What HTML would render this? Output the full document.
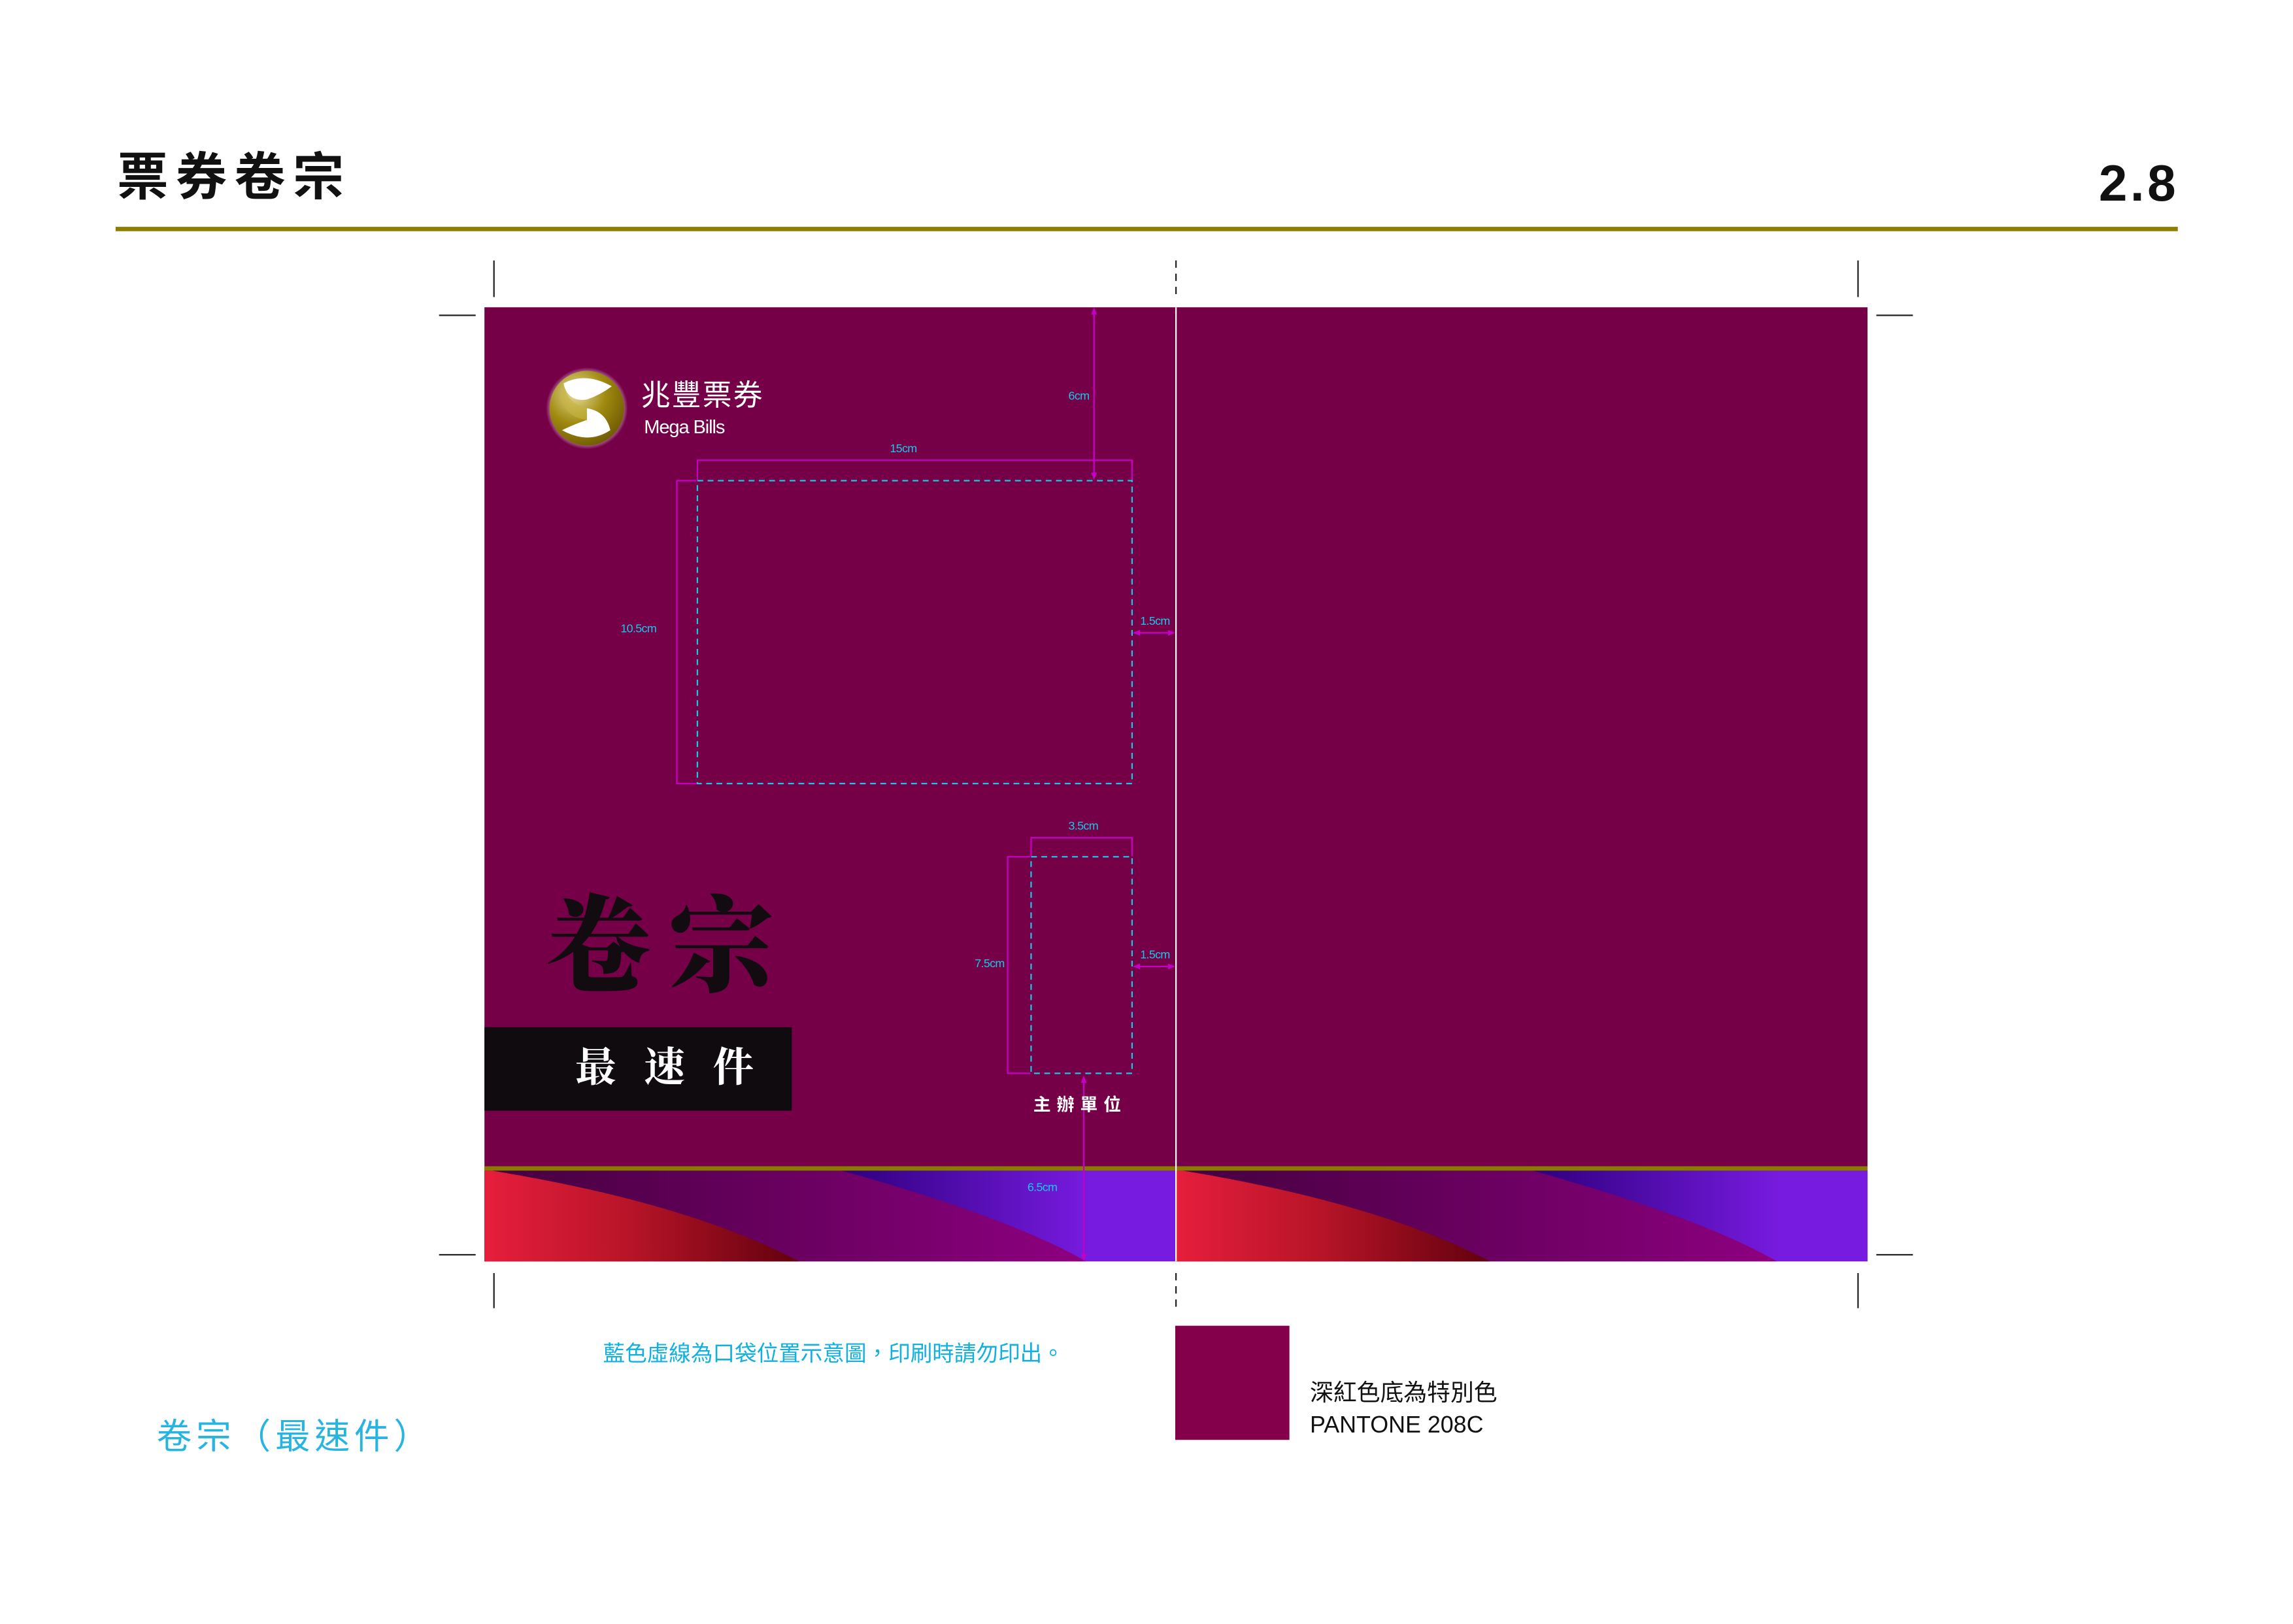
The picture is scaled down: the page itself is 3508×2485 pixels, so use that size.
<!DOCTYPE html>
<html><head><meta charset="utf-8"><style>
html,body{margin:0;padding:0;background:#fff;width:3508px;height:2481px;overflow:hidden}
#p{position:absolute;left:0;top:0;width:1570px;height:1110px;transform:scale(2.2391);transform-origin:0 0;font-family:"Liberation Sans","Noto Sans CJK TC",sans-serif}
.a{position:absolute;white-space:nowrap}
.c{color:#18c8e8;font-size:8px;letter-spacing:-0.3px}
</style></head><body><div id="p">
<div class="a" style="left:80px;top:100px;font-size:35px;font-weight:bold;letter-spacing:5px;color:#111;line-height:44px">票券卷宗</div>
<div class="a" style="left:1434px;top:104px;font-size:35px;font-weight:bold;letter-spacing:2px;color:#111;line-height:44px">2.8</div>
<div class="a" style="left:79px;top:155px;width:1409px;height:3px;background:#917d00"></div>

<svg class="a" style="left:0;top:0" width="1560" height="1103" viewBox="0 0 1560 1103">
<defs>
<linearGradient id="red" x1="331" x2="550" y1="0" y2="0" gradientUnits="userSpaceOnUse"><stop offset="0" stop-color="#e61e3c"/><stop offset="0.45" stop-color="#b81428"/><stop offset="1" stop-color="#5e000c"/></linearGradient>
<linearGradient id="pur" x1="340" x2="745" y1="0" y2="0" gradientUnits="userSpaceOnUse"><stop offset="0" stop-color="#460040"/><stop offset="1" stop-color="#8e0080"/></linearGradient>
<linearGradient id="blu" x1="580" x2="745" y1="0" y2="0" gradientUnits="userSpaceOnUse"><stop offset="0" stop-color="#300080"/><stop offset="1" stop-color="#781be0"/></linearGradient>
<linearGradient id="red2" x1="803" x2="1022" y1="0" y2="0" gradientUnits="userSpaceOnUse"><stop offset="0" stop-color="#e61e3c"/><stop offset="0.45" stop-color="#b81428"/><stop offset="1" stop-color="#5e000c"/></linearGradient>
<linearGradient id="pur2" x1="812" x2="1217" y1="0" y2="0" gradientUnits="userSpaceOnUse"><stop offset="0" stop-color="#460040"/><stop offset="1" stop-color="#8e0080"/></linearGradient>
<linearGradient id="blu2" x1="1052" x2="1217" y1="0" y2="0" gradientUnits="userSpaceOnUse"><stop offset="0" stop-color="#300080"/><stop offset="1" stop-color="#781be0"/></linearGradient>
<radialGradient id="gold" cx="0.35" cy="0.3" r="0.8"><stop offset="0" stop-color="#e8dc9a"/><stop offset="0.5" stop-color="#a08a10"/><stop offset="1" stop-color="#6a5500"/></radialGradient>
<radialGradient id="halo"><stop offset="0.8" stop-color="#fff"/><stop offset="1" stop-color="#fff" stop-opacity="0"/></radialGradient>
</defs>
<g stroke="#222" stroke-width="1">
<line x1="337.5" y1="178" x2="337.5" y2="203"/><line x1="1269.5" y1="178" x2="1269.5" y2="203"/>
<line x1="337.5" y1="870" x2="337.5" y2="894"/><line x1="1269.5" y1="870" x2="1269.5" y2="894"/>
<line x1="803.5" y1="178" x2="803.5" y2="203" stroke-dasharray="5 4"/><line x1="803.5" y1="870" x2="803.5" y2="894" stroke-dasharray="5 4"/>
<line x1="300" y1="215.5" x2="325" y2="215.5"/><line x1="1282" y1="215.5" x2="1307" y2="215.5"/>
<line x1="300" y1="857.5" x2="325" y2="857.5"/><line x1="1282" y1="857.5" x2="1307" y2="857.5"/>
</g>
<rect x="331" y="210" width="945" height="652" fill="#750047"/>
<rect x="331" y="800" width="472" height="62" fill="url(#blu)"/>
<path d="M331 800 L575 800 Q690 832 742 862 L331 862Z" fill="url(#pur)"/>
<path d="M331 800 L336 800 Q470 822 546 862 L331 862Z" fill="url(#red)"/>
<rect x="803" y="800" width="473" height="62" fill="url(#blu2)"/>
<path d="M803 800 L1047 800 Q1162 832 1214 862 L803 862Z" fill="url(#pur2)"/>
<path d="M803 800 L808 800 Q942 822 1018 862 L803 862Z" fill="url(#red2)"/>
<rect x="331" y="797" width="945" height="3" fill="#8a7a00"/>
<line x1="803.5" y1="210" x2="803.5" y2="862" stroke="#fff" stroke-width="1"/>
<circle cx="401" cy="279" r="28" fill="url(#halo)" opacity="0.7"/>
<circle cx="401" cy="279" r="25.5" fill="url(#gold)"/>
<path d="M385 262 Q400 254 418 264 Q410 270 401 273 Q388 275 385 262Z" fill="#fff"/>
<path d="M401 279 Q414 281 417 294 Q402 304 384 294 Q392 290 401 287Z" fill="#fff"/>
<path d="M385 262 Q386 275 401 279 L401 287 Q380 284 385 262Z" fill="#c8b440" opacity="0.6"/>
<g stroke="#c400c8" stroke-width="1" fill="none">
<path d="M476.5 328 V314.5 H773.5 V328"/>
<path d="M476 328.5 H462.5 V535.5 H476"/>
<line x1="747.5" y1="212" x2="747.5" y2="326"/>
<line x1="775" y1="432.5" x2="802" y2="432.5"/>
<path d="M704.5 585 V572.5 H773.5 V585"/>
<path d="M704 585.5 H688.5 V733.5 H704"/>
<line x1="775" y1="660.5" x2="802" y2="660.5"/>
<line x1="740.5" y1="737" x2="740.5" y2="860"/>
</g>
<g fill="#c400c8">
<path d="M747.5 210 l-2 5 h4z"/><path d="M747.5 328 l-2 -5 h4z"/>
<path d="M774 432.5 l5 -2 v4z"/><path d="M803 432.5 l-5 -2 v4z"/>
<path d="M774 660.5 l5 -2 v4z"/><path d="M803 660.5 l-5 -2 v4z"/>
<path d="M740.5 735 l-2 5 h4z"/><path d="M740.5 862 l-2 -5 h4z"/>
</g>
<g stroke="#1ac8e0" stroke-width="1" fill="none" stroke-dasharray="4 3">
<rect x="476.5" y="328.5" width="297" height="207"/>
<rect x="704.5" y="585.5" width="69" height="148"/>
</g>
</svg>

<div class="a" style="left:438px;top:258px;font-size:20px;color:#fff;letter-spacing:1px;line-height:26px">兆豐票券</div>
<div class="a" style="left:440px;top:284px;font-size:13px;color:#fff;line-height:16px;letter-spacing:-0.5px">Mega Bills</div>
<div class="a c" style="left:608px;top:302px">15cm</div>
<div class="a c" style="left:730px;top:266px">6cm</div>
<div class="a c" style="left:424px;top:425px">10.5cm</div>
<div class="a c" style="left:779px;top:420px">1.5cm</div>
<div class="a c" style="left:730px;top:560px">3.5cm</div>
<div class="a c" style="left:666px;top:654px">7.5cm</div>
<div class="a c" style="left:779px;top:648px">1.5cm</div>
<div class="a c" style="left:702px;top:807px">6.5cm</div>
<div class="a" style="left:706px;top:746px;font-size:12px;font-weight:bold;color:#fff;letter-spacing:4px;line-height:18px">主辦單位</div>

<div class="a" style="left:373px;top:603px;font-family:'Liberation Serif','Noto Serif CJK SC',serif;font-size:72px;font-weight:900;color:#120c10;letter-spacing:12px;line-height:90px">卷宗</div>
<div class="a" style="left:331px;top:702px;width:210px;height:57px;background:#0f0b0f"></div>
<div class="a" style="left:393px;top:711px;font-family:'Liberation Serif','Noto Serif CJK SC',serif;font-size:28px;font-weight:bold;color:#fff;letter-spacing:19px;line-height:40px">最速件</div>

<div class="a" style="left:412px;top:916px;font-size:15px;color:#10b0e0;line-height:20px">藍色虛線為口袋位置示意圖，印刷時請勿印出。</div>
<div class="a" style="left:107px;top:966px;font-size:24px;color:#28b4e0;letter-spacing:3px;line-height:34px">卷宗（最速件）</div>
<div class="a" style="left:803px;top:906px;width:78px;height:78px;background:#85004a"></div>
<div class="a" style="left:895px;top:942px;font-size:16px;color:#111;line-height:22px">深紅色底為特別色<br>PANTONE 208C</div>
</div></body></html>
